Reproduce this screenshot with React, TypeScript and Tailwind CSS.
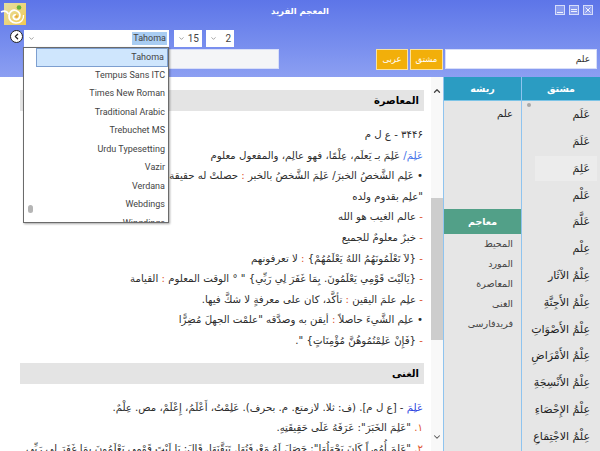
import { ChevronDown, ChevronLeft, ChevronUp } from "lucide-react";

const arabicFont = "font-['Tahoma','DejaVu_Sans','Noto_Sans',sans-serif]";
const latinFont = "font-['Roboto','Noto_Sans',sans-serif]";

const fonts = ["Tahoma", "Tempus Sans ITC", "Times New Roman", "Traditional Arabic", "Trebuchet MS", "Urdu Typesetting", "Vazir", "Verdana", "Webdings", "Wingdings"];

const derived = ["عَلَم", "عَلَمَ", "عَلِمَ", "عَلْم", "عَلَّمَ", "عِلْم", "عِلْمُ الآثَار", "عِلْمُ الأَجِنَّةِ", "عِلْمُ الأَصْوَاتِ", "عِلْمُ الأَمْرَاضِ", "عِلْمُ الأَنْسِجَةِ", "عِلْمُ الإِحْصَاءِ", "عِلْمُ الاجْتِمَاعِ"];

const dictionaries = ["المحيط", "المورد", "المعاصرة", "الغنى", "فریدفارسی"];

function Dash() {
  return <span className="text-[#e0572f]">- </span>;
}

function Colon() {
  return <span className="text-[#e0572f]">:</span>;
}

function Line({ children }: { children: React.ReactNode }) {
  return <p className="h-[20.6px] leading-[20.6px] whitespace-nowrap">{children}</p>;
}

function Heading({ children }: { children: React.ReactNode }) {
  return (
    <div className="h-[21px] bg-[#e4e4e4] pr-[5px] text-[10px] leading-[21px] font-bold text-black">{children}</div>
  );
}

function Stepper({ value }: { value: string }) {
  return (
    <div className={`flex h-[17px] w-[28px] items-center justify-between bg-white pl-[4px] pr-[3px] text-[10px] text-[#444] ${latinFont}`}>
      <ChevronDown size={7} strokeWidth={2} className="text-[#666]" />
      <span>{value}</span>
    </div>
  );
}

function WindowButtons() {
  return (
    <div className="flex gap-[4px] pt-[2px]">
      <div className="flex h-[10px] w-[10px] items-end justify-center border border-[#d5dcfa] bg-white/25 pb-px">
        <div className="h-px w-[6px] bg-[#eef1fe]" />
      </div>
      <div className="flex h-[10px] w-[10px] flex-col items-center justify-center gap-px border border-[#d5dcfa] bg-white/25">
        <div className="h-px w-[6px] bg-[#eef1fe]" />
        <div className="h-px w-[6px] bg-[#eef1fe]" />
      </div>
      <div className="flex h-[10px] w-[10px] items-center justify-center border border-[#d5dcfa] bg-white/25">
        <svg viewBox="0 0 6 6" className="h-[6px] w-[6px]">
          <path d="M0.5 0.5l5 5M5.5 0.5l-5 5" stroke="#eef1fe" strokeWidth="1" fill="none" />
        </svg>
      </div>
    </div>
  );
}

function Logo() {
  return (
    <div className="-ml-px h-[22px] w-[22px] bg-gradient-to-br from-[#e4e0a2] to-[#f2c94e]">
      <svg viewBox="0 0 22 22" className="h-[22px] w-[22px] overflow-visible">
        <path d="M-3 9c3-1.500 6-0.500 7.500 2" fill="none" stroke="#fff" strokeWidth="1.600" />
        <path d="M12 20c-4 0-7.500-3-7-7.500s4-6 7-5 5 4 3.500 7-5 2.500-6 0.500 0.500-3.500 2.500-3" fill="none" stroke="#fff" strokeWidth="1.700" />
        <path d="M12 20c5 0 8-3.500 7.500-8" fill="none" stroke="#fff" strokeWidth="1.300" />
        <circle cx="12.500" cy="13.500" r="1.300" fill="#e9a53a" />
        <circle cx="15" cy="4.500" r="2.300" fill="#62b23a" />
      </svg>
    </div>
  );
}

export default function App() {
  return (
    <div dir="ltr" className={`relative flex h-[451px] w-[600px] flex-col overflow-hidden bg-white ${arabicFont}`}>
      {/* Header */}
      <header className="h-[77px] shrink-0 bg-gradient-to-b from-[#5d75e8] to-[#8c9ff2]">
        <div className="relative flex h-[30px] items-start justify-between pl-[5px] pr-[7px] pt-[3px]">
          <Logo />
          <h1 dir="rtl" className="absolute left-0 right-0 top-[3px] text-center text-[8.500px] font-bold leading-[16px] text-white">
            المعجم الفريد
          </h1>
          <WindowButtons />
        </div>

        <div className="flex h-[19px] items-start pl-[10px]">
          <div className="flex h-[13px] w-[13px] items-center justify-center rounded-full border border-[#222] bg-white">
            <ChevronLeft size={9} strokeWidth={3.5} className="text-[#222]" />
          </div>
          <div className={`ml-px flex h-[17px] w-[145px] items-center justify-between bg-white pl-[4px] pr-[2px] text-[9px] text-[#444] ${latinFont}`}>
            <ChevronDown size={7} strokeWidth={2} className="text-[#666]" />
            <span className="bg-[#a9cdf2] px-px">Tahoma</span>
          </div>
          <div className="ml-[5px]"><Stepper value="15" /></div>
          <div className="ml-[4px]"><Stepper value="2" /></div>
        </div>

        <div className="flex h-[21px] items-start">
          <div className="ml-[23px] h-[20px] w-[256px] border border-[#d8def8] bg-[#f4f5f7]" />
          <button className="ml-[97px] h-[21px] w-[32px] border border-[#f9e2a0] bg-[#f2af0a] text-[8.500px] text-white">عربی</button>
          <button className="ml-[2px] h-[21px] w-[33px] border border-[#f9e2a0] bg-[#f2af0a] text-[8.500px] text-white">مشتق</button>
          <div dir="rtl" className="ml-[2px] h-[20px] w-[152px] border border-[#d8def8] bg-white pr-[6px] text-[9px] leading-[18px] text-[#333]">علم</div>
        </div>
      </header>

      {/* Body */}
      <div className="flex min-h-0 flex-1">
        <main dir="rtl" className="w-[431px] shrink-0 overflow-hidden pl-[20px] pr-[7px] pt-[13px] text-[10.200px] text-[#2c2c2c]">
          <Heading>المعاصرة</Heading>
          <div className="pt-[14px] pr-px">
            <Line>۳۴۴۶ - ع ل م</Line>
            <Line><span className="text-[#3f6fe8]">عَلِمَ/</span> عَلِمَ بـ يَعلَم، عِلْمًا، فهو عالِم، والمفعول معلوم</Line>
            <Line>• عَلِم الشَّخصُ الخبرَ/ عَلِمَ الشَّخصُ بالخبر <Colon /> حصلتْ له حقيقة العلم</Line>
            <Line>"علِم بقدوم ولده</Line>
            <Line><Dash />عالم الغيب هو الله</Line>
            <Line><Dash />خبرٌ معلومٌ للجميع</Line>
            <Line><Dash />{"{لاَ تَعْلَمُونَهُمُ اللهُ يَعْلَمُهُمْ}"} <Colon /> لا تعرفونهم</Line>
            <Line><Dash />{"{يَالَيْتَ قَوْمِي يَعْلَمُونَ. بِمَا غَفَرَ لِي رَبِّي}"} " ° الوقت المعلوم <Colon /> القيامة</Line>
            <Line><Dash />علِم علمَ اليقين <Colon /> تأكَّد، كان على معرفةٍ لا شكَّ فيها.</Line>
            <Line>• علِم الشَّيءَ حاصلاً <Colon /> أيقن به وصدَّقه "علمْت الجهلَ مُضِرًّا</Line>
            <Line><Dash />{"{فَإِنْ عَلِمْتُمُوهُنَّ مُؤْمِنَاتٍ}"} ".</Line>
          </div>
          <div className="pt-[11px]"><Heading>الغنى</Heading></div>
          <div className="pt-[14px] pr-px">
            <Line><span className="text-[#2b3fe0]">عَلِمَ</span> - [ع ل م]. (ف: ثلا. لازمتع. م. بحرف). عَلِمْتُ، أَعْلَمُ، إِعْلَمْ، مص. عِلْمٌ.</Line>
            <Line><span className="text-[#e0572f]">١. </span>"عَلِمَ الخَبَرَ": عَرَفَهُ عَلَى حَقِيقَتِهِ.</Line>
            <Line><span className="text-[#e0572f]">٢. </span>"عَلِمَ أُمُوراً كَانَ يَجْهَلُهَا": حَصَلَ لَهُ مَعْرِفَتُهَا. تَيَقَّنَهَا. قَالَ: يَا لَيْتَ قَوْمِي يَعْلَمُونَ بِمَا غَفَرَ لِي رَبِّي</Line>
          </div>
        </main>

        {/* Scrollbar */}
        <div className="flex h-full w-[12px] shrink-0 flex-col items-center bg-[#f8f8f8] pt-[9px]">
          <ChevronUp size={10} strokeWidth={3} className="text-[#444]" />
          <div className="mt-[102px] h-[142px] w-full bg-[#cdcdcd]" />
          <ChevronDown size={10} strokeWidth={2.500} className="mt-[92px] text-[#555]" />
        </div>

        {/* Root column */}
        <section dir="rtl" className="flex w-[79px] shrink-0 flex-col border-x border-[#8fc4ef] bg-[#e6e6e6]">
          <div className="h-[24px] shrink-0 border-b border-[#7cc4e6] bg-[#2b9cc2] text-center text-[9.500px] font-bold leading-[23px] text-white">ریشه</div>
          <div className="h-[108px] shrink-0 pr-[8px] pt-[3px] text-[10px] leading-[20px] text-[#222]">علم</div>
          <div className="h-[25px] shrink-0 bg-[#52a088] text-center text-[9.500px] font-bold leading-[25px] text-white">معاجم</div>
          <ul className="pr-[8px] text-[9.500px] text-[#444]">
            {dictionaries.map((d) => (
              <li key={d} className="h-[20px] leading-[20px]">{d}</li>
            ))}
          </ul>
        </section>

        {/* Derived column */}
        <section dir="rtl" className="relative flex min-w-0 flex-1 flex-col bg-[#e6e6e6]">
          <div className="h-[24px] shrink-0 border-b border-[#7cc4e6] bg-[#2b9cc2] text-center text-[9.500px] font-bold leading-[23px] text-white">مشتق</div>
          <ul className="pt-[1px] text-[11px] text-[#222]">
            {derived.map((d, i) => (
              <li key={d} className="ml-[4px] mr-[3px] flex h-[26.800px] items-center pr-[7px] whitespace-nowrap">
                <span className={i === 2 ? "-mr-[7px] flex h-[25px] w-[62px] items-center bg-[#ececec] pr-[7px]" : ""}>{d}</span>
              </li>
            ))}
          </ul>
          <div className="absolute left-[5px] top-[26px] h-[4px] w-[4px] rounded-full bg-[#a8a8a8]" />
        </section>
      </div>

      {/* Open font list */}
      <div className={`absolute left-[23px] top-[47px] h-[176px] w-[146px] overflow-hidden border border-[#6b6b6b] bg-white shadow-[1px_1px_2px_rgba(0,0,0,0.35)] ${latinFont}`}>
        <ul className="ml-[12px] text-right text-[9px] text-[#444]">
          {fonts.map((f, i) => (
            <li key={f} className={`h-[18.500px] pr-[3px] leading-[16.500px] ${i === 0 ? "border border-[#7d9fd0] bg-[#cfe6fd] pr-[2px]" : ""}`}>{f}</li>
          ))}
        </ul>
        <div className="absolute left-[4px] top-[157px] h-[8px] w-[5px] rounded-full bg-[#b5b5b5]" />
      </div>
    </div>
  );
}
